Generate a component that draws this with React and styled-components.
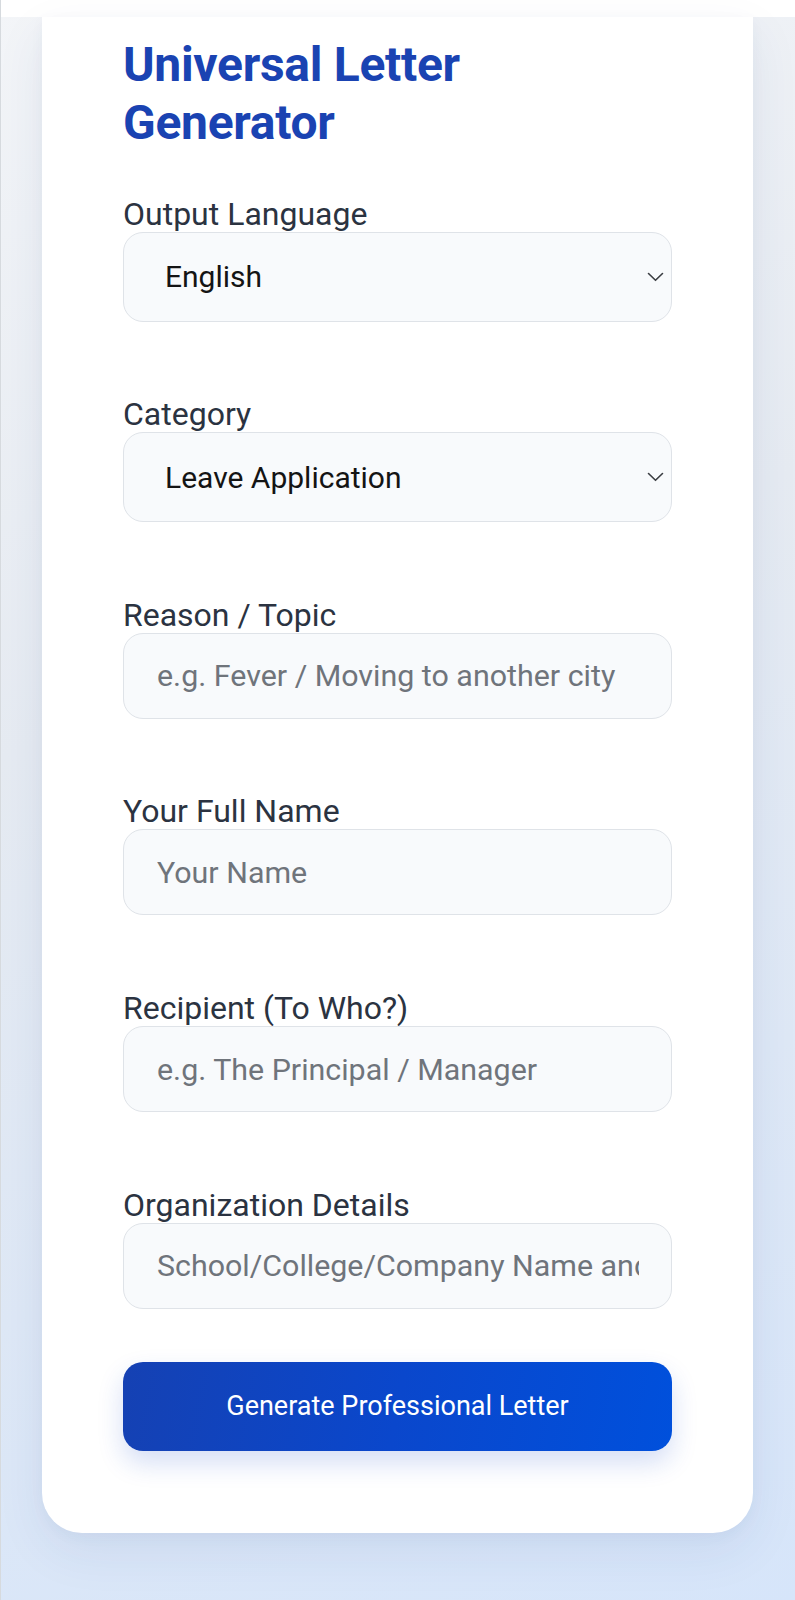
import React from 'react';
import styled, { createGlobalStyle } from 'styled-components';

const GlobalStyle = createGlobalStyle`
  html, body {
    margin: 0;
    padding: 0;
  }
  body {
    font-family: Roboto, "Noto Sans", "Liberation Sans", sans-serif;
    -webkit-font-smoothing: antialiased;
  }
  *, *::before, *::after {
    box-sizing: border-box;
  }
`;

const Page = styled.div`
  min-height: 100vh;
  display: flex;
  flex-direction: column;
  border-left: 1px solid #d6dade;
  background: linear-gradient(160deg, #f3f5f8 0%, #e6ebf2 40%, #d6e5fa 100%);
`;

const TopBar = styled.div`
  height: 17px;
  flex-shrink: 0;
  background: #ffffff;
`;

const Main = styled.main`
  flex: 1;
  padding: 0 42px 71px 41px;
`;

const Card = styled.section`
  display: flex;
  flex-direction: column;
  background: #ffffff;
  border-radius: 0 0 40px 40px;
  padding: 19px 81px 82px;
  box-shadow: 0 18px 50px rgba(40, 70, 130, 0.08), 0 4px 14px rgba(40, 70, 130, 0.04);
`;

const Title = styled.h1`
  margin: 0 0 45px;
  font-size: 48px;
  line-height: 57.5px;
  font-weight: 700;
  color: #1a43b2;
  letter-spacing: -0.3px;
`;

const Field = styled.div`
  display: flex;
  flex-direction: column;
  margin-bottom: ${(p) => (p.$last ? '53px' : '74.8px')};
`;

const Label = styled.label`
  display: block;
  font-size: 32px;
  line-height: 36px;
  font-weight: 400;
  color: #2b3341;
`;

const SelectWrap = styled.div`
  position: relative;
`;

const fieldBase = `
  width: 100%;
  border: 1.5px solid #dfe3e8;
  border-radius: 20px;
  background: #f8fafc;
  font-family: Roboto, "Noto Sans", "Liberation Sans", sans-serif;
  outline: none;
  margin: 0;
`;

const Select = styled.select`
  ${fieldBase}
  appearance: none;
  -webkit-appearance: none;
  height: 89.5px;
  padding: 0 40px 0 41px;
  font-size: 30px;
  font-weight: 400;
  color: #141414;
`;

const Chevron = styled.svg`
  position: absolute;
  right: 8px;
  top: 50%;
  width: 17px;
  height: 11px;
  transform: translateY(-50%);
  pointer-events: none;
`;

const Input = styled.input`
  ${fieldBase}
  height: 86px;
  padding: 0 32px 0 33px;
  font-size: 30.4px;
  color: #141414;

  &::placeholder {
    color: #6f747b;
    opacity: 1;
  }
`;

const Button = styled.button`
  width: 100%;
  height: 89px;
  border: none;
  border-radius: 20px;
  background: linear-gradient(100deg, #1541b3 0%, #0a47cc 50%, #0050dc 100%);
  color: #ffffff;
  font-family: Roboto, "Noto Sans", "Liberation Sans", sans-serif;
  font-size: 27px;
  font-weight: 400;
  cursor: pointer;
  box-shadow: 0 12px 26px rgba(20, 70, 200, 0.18);
`;

const ChevronIcon = () => (
  <Chevron viewBox="0 0 17 11" fill="none">
    <path d="M1.5 2 L8.5 8.8 L15.5 2" stroke="#3a3d42" strokeWidth="1.6" strokeLinecap="round" strokeLinejoin="round" />
  </Chevron>
);

const SelectField = ({ id, label, options }) => (
  <Field>
    <Label htmlFor={id}>{label}</Label>
    <SelectWrap>
      <Select id={id} defaultValue={options[0]}>
        {options.map((o) => (
          <option key={o} value={o}>{o}</option>
        ))}
      </Select>
      <ChevronIcon />
    </SelectWrap>
  </Field>
);

const TextField = ({ id, label, placeholder, last }) => (
  <Field $last={last}>
    <Label htmlFor={id}>{label}</Label>
    <Input id={id} type="text" placeholder={placeholder} />
  </Field>
);

export default function App() {
  return (
    <>
      <GlobalStyle />
      <Page>
        <TopBar />
        <Main>
          <Card>
            <Title>Universal Letter Generator</Title>
            <SelectField id="lang" label="Output Language" options={['English', 'Hindi', 'Spanish', 'French']} />
            <SelectField id="cat" label="Category" options={['Leave Application', 'Resignation', 'Complaint', 'Request']} />
            <TextField id="reason" label="Reason / Topic" placeholder="e.g. Fever / Moving to another city" />
            <TextField id="name" label="Your Full Name" placeholder="Your Name" />
            <TextField id="to" label="Recipient (To Who?)" placeholder="e.g. The Principal / Manager" />
            <TextField id="org" label="Organization Details" placeholder="School/College/Company Name and Address" last />
            <Button type="button">Generate Professional Letter</Button>
          </Card>
        </Main>
      </Page>
    </>
  );
}
